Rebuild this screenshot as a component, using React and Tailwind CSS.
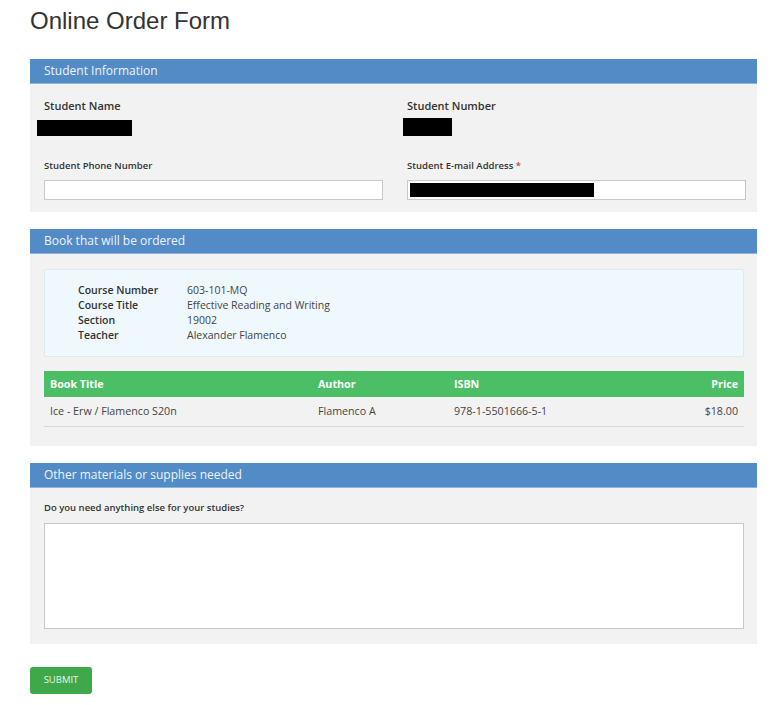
export default function App() {
  const info = [
    ["Course Number", "603-101-MQ"],
    ["Course Title", "Effective Reading and Writing"],
    ["Section", "19002"],
    ["Teacher", "Alexander Flamenco"],
  ];

  return (
    <div className="min-h-screen bg-white pl-[30px] pr-[19px] pt-[7px] pb-[11px] font-['Open_Sans',sans-serif] text-[#333]">
      <h1 className="font-['Liberation_Sans',Arial,sans-serif] text-[24px] leading-[28px] text-[#333]">
        Online Order Form
      </h1>

      {/* Student info */}
      <div className="mt-[24px] bg-[#f2f2f2]">
        <div className="h-[25px] bg-[#528bc5] border-b border-[#8fb3dc] pl-[14px] text-[12px] leading-[24px] text-[#eef4fb]">
          Student Information
        </div>
        <div className="grid grid-cols-[339px_339px] gap-x-[24px] pl-[14px] pt-[14px] pb-[12px]">
          <div>
            <div className="text-[11px] leading-[16px] font-semibold text-[#333]">Student Name</div>
            <div className="mt-[6px] -ml-[7px] h-[16px] w-[95px] bg-black" />
          </div>
          <div>
            <div className="text-[11px] leading-[16px] font-semibold text-[#333]">Student Number</div>
            <div className="mt-[4px] -ml-[4px] h-[18px] w-[49px] bg-black" />
          </div>
          <div className="mt-[23px]">
            <div className="text-[9.5px] leading-[14px] font-semibold text-[#333]">Student Phone Number</div>
            <input className="mt-[7px] block h-[20px] w-[339px] border border-[#c8c8c8] bg-white" />
          </div>
          <div className="mt-[23px]">
            <div className="text-[9.5px] leading-[14px] font-semibold text-[#333]">
              Student E-mail Address <span className="text-[#b94a48]">*</span>
            </div>
            <div className="mt-[7px] flex h-[20px] w-[339px] items-center border border-[#c8c8c8] bg-white pl-[2px]">
              <div className="h-[14px] w-[184px] bg-black" />
            </div>
          </div>
        </div>
      </div>

      {/* Book */}
      <div className="mt-[17px] bg-[#f2f2f2]">
        <div className="h-[25px] bg-[#528bc5] border-b border-[#8fb3dc] pl-[14px] text-[12px] leading-[24px] text-[#eef4fb]">
          Book that will be ordered
        </div>
        <div className="pl-[14px] pr-[13px] pt-[15px] pb-[19px]">
          <div className="h-[88px] rounded-[2px] border border-[#dfeaf0] bg-[#eef8fd] pl-[33px] pt-[13px]">
            {info.map(([k, v]) => (
              <div key={k} className="flex text-[10.5px] leading-[15px]">
                <div className="w-[109px] font-semibold text-[#333]">{k}</div>
                <div className="text-[#444]">{v}</div>
              </div>
            ))}
          </div>
          <table className="mt-[14px] w-full text-[10.7px]">
            <thead>
              <tr className="h-[26px] bg-[#4cbf66] text-left text-white">
                <th className="w-[274px] pl-[6px] font-bold">Book Title</th>
                <th className="w-[136px] font-bold">Author</th>
                <th className="font-bold">ISBN</th>
                <th className="pr-[6px] text-right font-bold">Price</th>
              </tr>
            </thead>
            <tbody>
              <tr className="h-[29px] border-b border-[#d8d8d8] text-[#444]">
                <td className="pl-[6px]">Ice - Erw / Flamenco S20n</td>
                <td>Flamenco A</td>
                <td>978-1-5501666-5-1</td>
                <td className="pr-[6px] text-right">$18.00</td>
              </tr>
            </tbody>
          </table>
        </div>
      </div>

      {/* Other */}
      <div className="mt-[17px] bg-[#f2f2f2]">
        <div className="h-[25px] bg-[#528bc5] border-b border-[#8fb3dc] pl-[14px] text-[12px] leading-[24px] text-[#eef4fb]">
          Other materials or supplies needed
        </div>
        <div className="pl-[14px] pr-[13px] pt-[13px] pb-[15px]">
          <div className="text-[9.5px] leading-[14px] font-semibold text-[#333]">
            Do you need anything else for your studies?
          </div>
          <textarea className="mt-[8px] block h-[106px] w-full resize-none border border-[#c8c8c8] bg-white" />
        </div>
      </div>

      <button className="mt-[23px] h-[27px] w-[62px] rounded-[3px] bg-[#3ea84b] text-[9.5px] text-[#eaf7ea]">
        SUBMIT
      </button>
    </div>
  );
}
